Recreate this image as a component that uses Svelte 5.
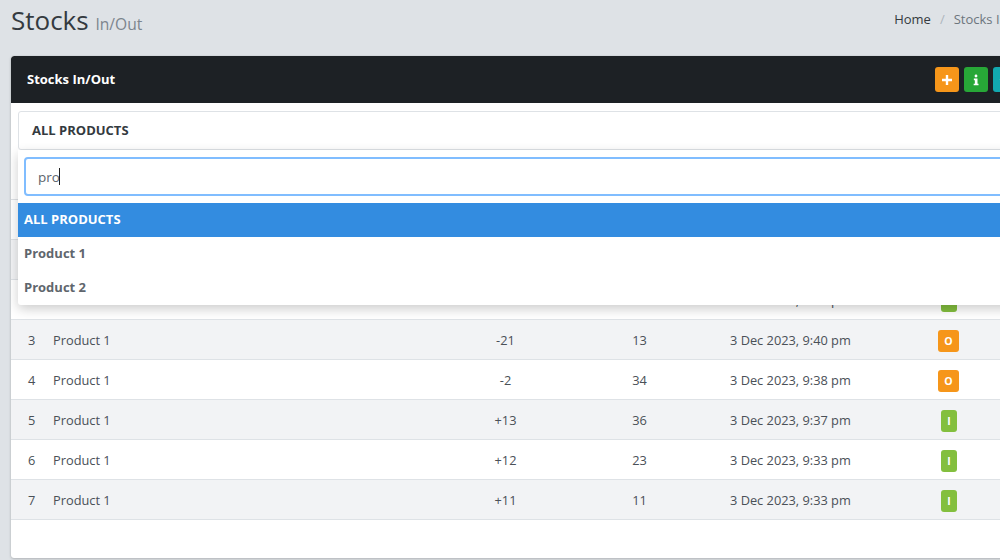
<script>
  const rows = [
    { id: 1, name: 'Product 1', change: '+5', balance: 23, date: '3 Dec 2023, 9:43 pm', type: 'I' },
    { id: 2, name: 'Product 1', change: '+5', balance: 18, date: '3 Dec 2023, 9:41 pm', type: 'I' },
    { id: 3, name: 'Product 1', change: '-21', balance: 13, date: '3 Dec 2023, 9:40 pm', type: 'O' },
    { id: 4, name: 'Product 1', change: '-2', balance: 34, date: '3 Dec 2023, 9:38 pm', type: 'O' },
    { id: 5, name: 'Product 1', change: '+13', balance: 36, date: '3 Dec 2023, 9:37 pm', type: 'I' },
    { id: 6, name: 'Product 1', change: '+12', balance: 23, date: '3 Dec 2023, 9:33 pm', type: 'I' },
    { id: 7, name: 'Product 1', change: '+11', balance: 11, date: '3 Dec 2023, 9:33 pm', type: 'I' }
  ];
</script>

<div class="page">
  <header class="top">
    <h1>Stocks <small>In/Out</small></h1>
    <nav class="crumbs">
      <span class="home">Home</span>
      <span class="sep">/</span>
      <span>Stocks In/Out</span>
    </nav>
  </header>

  <section class="card">
    <div class="card-head">
      <h2>Stocks In/Out</h2>
      <div class="tools">
        <button class="orange" aria-label="Add">
          <svg viewBox="0 0 12 12" width="12" height="12"><path d="M6 1v10M1 6h10" stroke="#fff" stroke-width="2.4" /></svg>
        </button>
        <button class="green" aria-label="Info">
          <svg viewBox="0 0 12 14" width="10" height="14"><circle cx="6" cy="2.2" r="1.7" fill="#fff" /><path d="M3.4 5.2h4.4v6.2h1.2v2H3.2v-2h1.4V7.2H3.4z" fill="#fff" /></svg>
        </button>
        <button class="teal" aria-label="Refresh">
          <svg viewBox="0 0 14 14" width="13" height="13"><path d="M12 7a5 5 0 1 1-1.5-3.6" fill="none" stroke="#fff" stroke-width="2" /></svg>
        </button>
      </div>
    </div>

    <div class="card-body">
      <div class="select">ALL PRODUCTS</div>

      <div class="dropdown">
        <div class="search">
          <div class="input">pro<i class="caret"></i></div>
        </div>
        <ul>
          <li class="active">ALL PRODUCTS</li>
          <li>Product 1</li>
          <li>Product 2</li>
        </ul>
      </div>

      <table>
        <thead>
          <tr>
            <th class="c-id">#</th>
            <th class="c-name">Product</th>
            <th class="c-num">Qty</th>
            <th class="c-num2">Balance</th>
            <th class="c-date">Date</th>
            <th class="c-type">Type</th>
            <th></th>
          </tr>
        </thead>
        <tbody>
          {#each rows as row}
            <tr>
              <td class="c-id">{row.id}</td>
              <td class="c-name">{row.name}</td>
              <td class="c-num">{row.change}</td>
              <td class="c-num2">{row.balance}</td>
              <td class="c-date">{row.date}</td>
              <td class="c-type">
                <span class="badge" class:out={row.type === 'O'}>{row.type}</span>
              </td>
              <td></td>
            </tr>
          {/each}
        </tbody>
      </table>
    </div>
  </section>
</div>

<style>
  :global(body) {
    margin: 0;
    background: #dee2e6;
    overflow: hidden;
    font-family: "Open Sans", sans-serif;
    color: #343a40;
  }

  .page {
    width: 1044px;
    height: 560px;
    padding: 0 9px 0 11px;
    box-sizing: border-box;
    overflow: hidden;
  }

  .top {
    height: 56px;
    display: flex;
    justify-content: space-between;
    align-items: flex-start;
  }

  h1 {
    margin: 0;
    padding-top: 2px;
    font-size: 26px;
    line-height: 36px;
    font-weight: 400;
    color: #343a40;
  }

  h1 small {
    font-size: 15.6px;
    color: #7c858d;
  }

  .crumbs {
    display: flex;
    gap: 9px;
    font-size: 13px;
    line-height: 18px;
    padding-top: 10px;
    color: #6c757d;
    white-space: nowrap;
  }

  .crumbs .home {
    color: #343a40;
  }

  .crumbs .sep {
    color: #adb5bd;
  }

  .card {
    background: #fff;
    border-radius: 3px;
    height: 502px;
    box-shadow: 0 0 1px rgba(0, 0, 0, 0.13), 0 1px 3px rgba(0, 0, 0, 0.2);
    overflow: hidden;
  }

  .card-head {
    height: 47px;
    box-sizing: border-box;
    background: #1d2125;
    display: flex;
    align-items: center;
    justify-content: space-between;
    padding: 0 18px 0 16px;
    border-radius: 3px 3px 0 0;
  }

  h2 {
    margin: 0 0 2px;
    color: #fff;
    font-size: 13px;
    font-weight: 700;
  }

  .tools {
    display: flex;
    gap: 5px;
  }

  .tools button {
    width: 24px;
    height: 25px;
    border: 0;
    padding: 0;
    border-radius: 3px;
    display: flex;
    align-items: center;
    justify-content: center;
  }

  .orange {
    background: #f6961a;
  }

  .green {
    background: #27a737;
  }

  .teal {
    background: #12a9b0;
  }

  .card-body {
    position: relative;
    padding-top: 8px;
  }

  .select {
    margin: 0 7px;
    height: 39px;
    box-sizing: border-box;
    border: 1px solid #dee2e6;
    border-radius: 3px;
    padding: 0 13px 2px;
    display: flex;
    align-items: center;
    font-size: 13px;
    font-weight: 700;
    color: #343a40;
  }

  .dropdown {
    position: absolute;
    left: 7px;
    right: 7px;
    top: 47px;
    background: #fff;
    border-radius: 0 0 3px 3px;
    box-shadow: 0 4px 12px rgba(0, 0, 0, 0.2);
    z-index: 5;
  }

  .search {
    padding: 7px 6px;
  }

  .input {
    height: 39px;
    box-sizing: border-box;
    border: 2px solid #80bdff;
    border-radius: 4px;
    padding: 0 12px;
    display: flex;
    align-items: center;
    font-size: 13.5px;
    color: #5c646c;
  }

  .caret {
    display: inline-block;
    width: 1px;
    height: 17px;
    margin-left: -1px;
    background: #222;
  }

  ul {
    list-style: none;
    margin: 0;
    padding: 0;
  }

  li {
    height: 34px;
    box-sizing: border-box;
    padding: 0 6px 2px;
    display: flex;
    align-items: center;
    font-size: 13px;
    font-weight: 700;
    color: #5f666d;
  }

  li.active {
    background: #338ce0;
    color: #fff;
  }

  table {
    width: 100%;
    margin-top: 49px;
    border-collapse: collapse;
    table-layout: fixed;
    font-size: 12.8px;
    color: #4a5057;
    border-top: 1px solid #dee2e6;
  }

  th,
  td {
    height: 40px;
    box-sizing: border-box;
    padding: 0;
    border-bottom: 1px solid #dee2e6;
    font-weight: 400;
  }

  tbody tr:nth-child(odd) {
    background: #f2f3f5;
  }

  .c-id {
    width: 42px;
    text-align: left;
    padding-left: 17px;
  }

  .c-name {
    width: 409px;
    text-align: left;
  }

  .c-num {
    width: 87px;
    text-align: center;
  }

  .c-num2 {
    width: 181px;
    text-align: center;
  }

  .c-date {
    width: 208px;
    text-align: left;
  }

  .c-type {
    width: 40px;
    text-align: left;
    padding-top: 2px;
  }

  .badge {
    display: inline-flex;
    width: 16px;
    height: 22px;
    align-items: center;
    justify-content: center;
    background: #83bf3e;
    color: #fff;
    font-size: 10.5px;
    font-weight: 700;
    border-radius: 3px;
    margin-left: 3px;
    vertical-align: middle;
  }

  .badge.out {
    width: 21px;
    background: #f6961a;
    margin-left: 0;
  }
</style>
